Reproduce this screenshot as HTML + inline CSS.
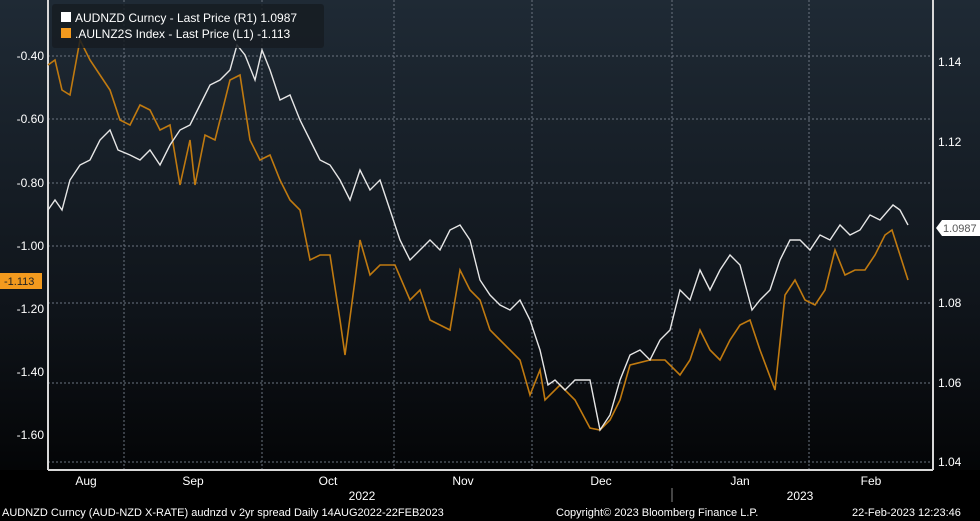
<!DOCTYPE html><html><head><style>
body{margin:0;width:980px;height:521px;background:#000;overflow:hidden;font-family:"Liberation Sans",sans-serif}
</style></head><body>
<svg width="980" height="521" xmlns="http://www.w3.org/2000/svg" style="position:absolute;left:0;top:0">
<defs><linearGradient id="g" x1="0" y1="0" x2="0" y2="1"><stop offset="0" stop-color="#1f2a35"/><stop offset="0.6" stop-color="#0f141a"/><stop offset="1" stop-color="#000"/></linearGradient></defs>
<rect width="980" height="521" fill="url(#g)"/>
<rect x="0" y="470" width="980" height="51" fill="#000"/>
<g stroke="#6b7480" stroke-width="1" stroke-dasharray="2,2" fill="none">
<line x1="124" y1="0" x2="124" y2="470"/><line x1="262" y1="0" x2="262" y2="470"/><line x1="394" y1="0" x2="394" y2="470"/><line x1="532" y1="0" x2="532" y2="470"/><line x1="672" y1="0" x2="672" y2="470"/><line x1="809" y1="0" x2="809" y2="470"/>
<line x1="48" y1="56" x2="933" y2="56"/><line x1="48" y1="119" x2="933" y2="119"/><line x1="48" y1="183" x2="933" y2="183"/><line x1="48" y1="246" x2="933" y2="246"/><line x1="48" y1="303" x2="933" y2="303"/><line x1="48" y1="383" x2="933" y2="383"/><line x1="48" y1="462" x2="933" y2="462"/>
</g>
<g stroke="#d8d8d8" stroke-width="2" fill="none"><line x1="48" y1="0" x2="48" y2="470"/><line x1="933" y1="0" x2="933" y2="470"/><line x1="48" y1="470" x2="933" y2="470"/></g>
<polyline fill="none" stroke="#c07a10" stroke-width="1.6" points="48,65 55,60 62,90 70,95 80,40 90,60 100,75 110,90 120,120 130,125 140,105 150,110 160,130 170,125 180,185 190,140 195,185 205,135 215,140 230,80 240,75 250,140 260,160 270,155 280,180 290,200 300,210 310,260 320,255 330,255 340,320 345,355 355,280 360,240 370,275 380,265 395,265 410,300 420,290 430,320 440,325 450,330 460,270 470,290 480,300 490,330 500,340 510,350 520,360 530,395 540,370 545,400 560,385 575,400 590,428 600,430 610,420 620,400 630,365 650,360 665,360 680,375 690,360 700,330 710,350 720,360 730,340 740,325 750,320 760,350 775,390 785,295 795,280 805,300 815,305 825,290 835,250 845,275 855,270 865,270 875,255 885,235 892,230 900,255 908,280"/>
<polyline fill="none" stroke="#e6e6e6" stroke-width="1.4" points="48,210 55,200 62,210 70,180 80,165 90,160 100,140 110,130 118,150 130,155 140,160 150,150 160,165 170,145 180,130 190,125 200,105 210,85 220,80 230,70 237,45 245,55 255,80 262,50 270,70 280,100 290,95 300,120 310,140 320,160 330,165 340,180 350,200 360,170 370,190 380,180 390,210 400,240 410,260 420,250 430,240 440,250 450,230 460,225 470,240 480,280 490,295 500,305 510,310 520,300 530,320 540,350 548,385 555,380 565,390 575,380 590,380 600,430 610,415 620,380 630,355 640,350 650,360 660,340 670,330 680,290 690,300 700,270 710,290 720,270 730,255 740,265 752,310 760,300 770,290 780,260 790,240 800,240 810,250 820,235 830,240 840,225 850,235 860,230 870,215 880,220 893,205 900,210 908,225"/>
<rect x="52" y="4" width="272" height="44" rx="3" fill="#161c22" opacity="0.85"/>
<rect x="61" y="12" width="10" height="10" fill="#fff"/><rect x="61" y="28" width="10" height="10" fill="#f39a1e"/>
<g font-size="12" fill="#fff"><text x="75" y="22">AUDNZD Curncy - Last Price (R1)  1.0987</text><text x="75" y="38">.AULNZ2S Index - Last Price (L1)  -1.113</text></g>
<g font-size="12" fill="#fff" text-anchor="end"><text x="44" y="60">-0.40</text><text x="44" y="123">-0.60</text><text x="44" y="187">-0.80</text><text x="44" y="250">-1.00</text><text x="44" y="313">-1.20</text><text x="44" y="376">-1.40</text><text x="44" y="439">-1.60</text></g>
<rect x="0" y="273" width="42" height="16" fill="#f39a1e"/><text x="4" y="285" font-size="11" fill="#222">-1.113</text>
<g font-size="12" fill="#fff"><text x="938" y="66">1.14</text><text x="938" y="146">1.12</text><text x="938" y="307">1.08</text><text x="938" y="387">1.06</text><text x="938" y="466">1.04</text></g>
<path d="M936,228 L942,220 L980,220 L980,236 L942,236 Z" fill="#fff"/><text x="943" y="232" font-size="11" fill="#555">1.0987</text>
<g font-size="12" fill="#fff" text-anchor="middle"><text x="86" y="485">Aug</text><text x="193" y="485">Sep</text><text x="328" y="485">Oct</text><text x="463" y="485">Nov</text><text x="601" y="485">Dec</text><text x="740" y="485">Jan</text><text x="871" y="485">Feb</text><text x="362" y="500">2022</text><text x="800" y="500">2023</text></g>
<line x1="672" y1="488" x2="672" y2="502" stroke="#888"/>
<g font-size="11" fill="#fff"><text x="2" y="516">AUDNZD Curncy (AUD-NZD X-RATE) audnzd v 2yr spread  Daily 14AUG2022-22FEB2023</text><text x="556" y="516">Copyright© 2023 Bloomberg Finance L.P.</text><text x="852" y="516">22-Feb-2023 12:23:46</text></g>
</svg>
</body></html>
